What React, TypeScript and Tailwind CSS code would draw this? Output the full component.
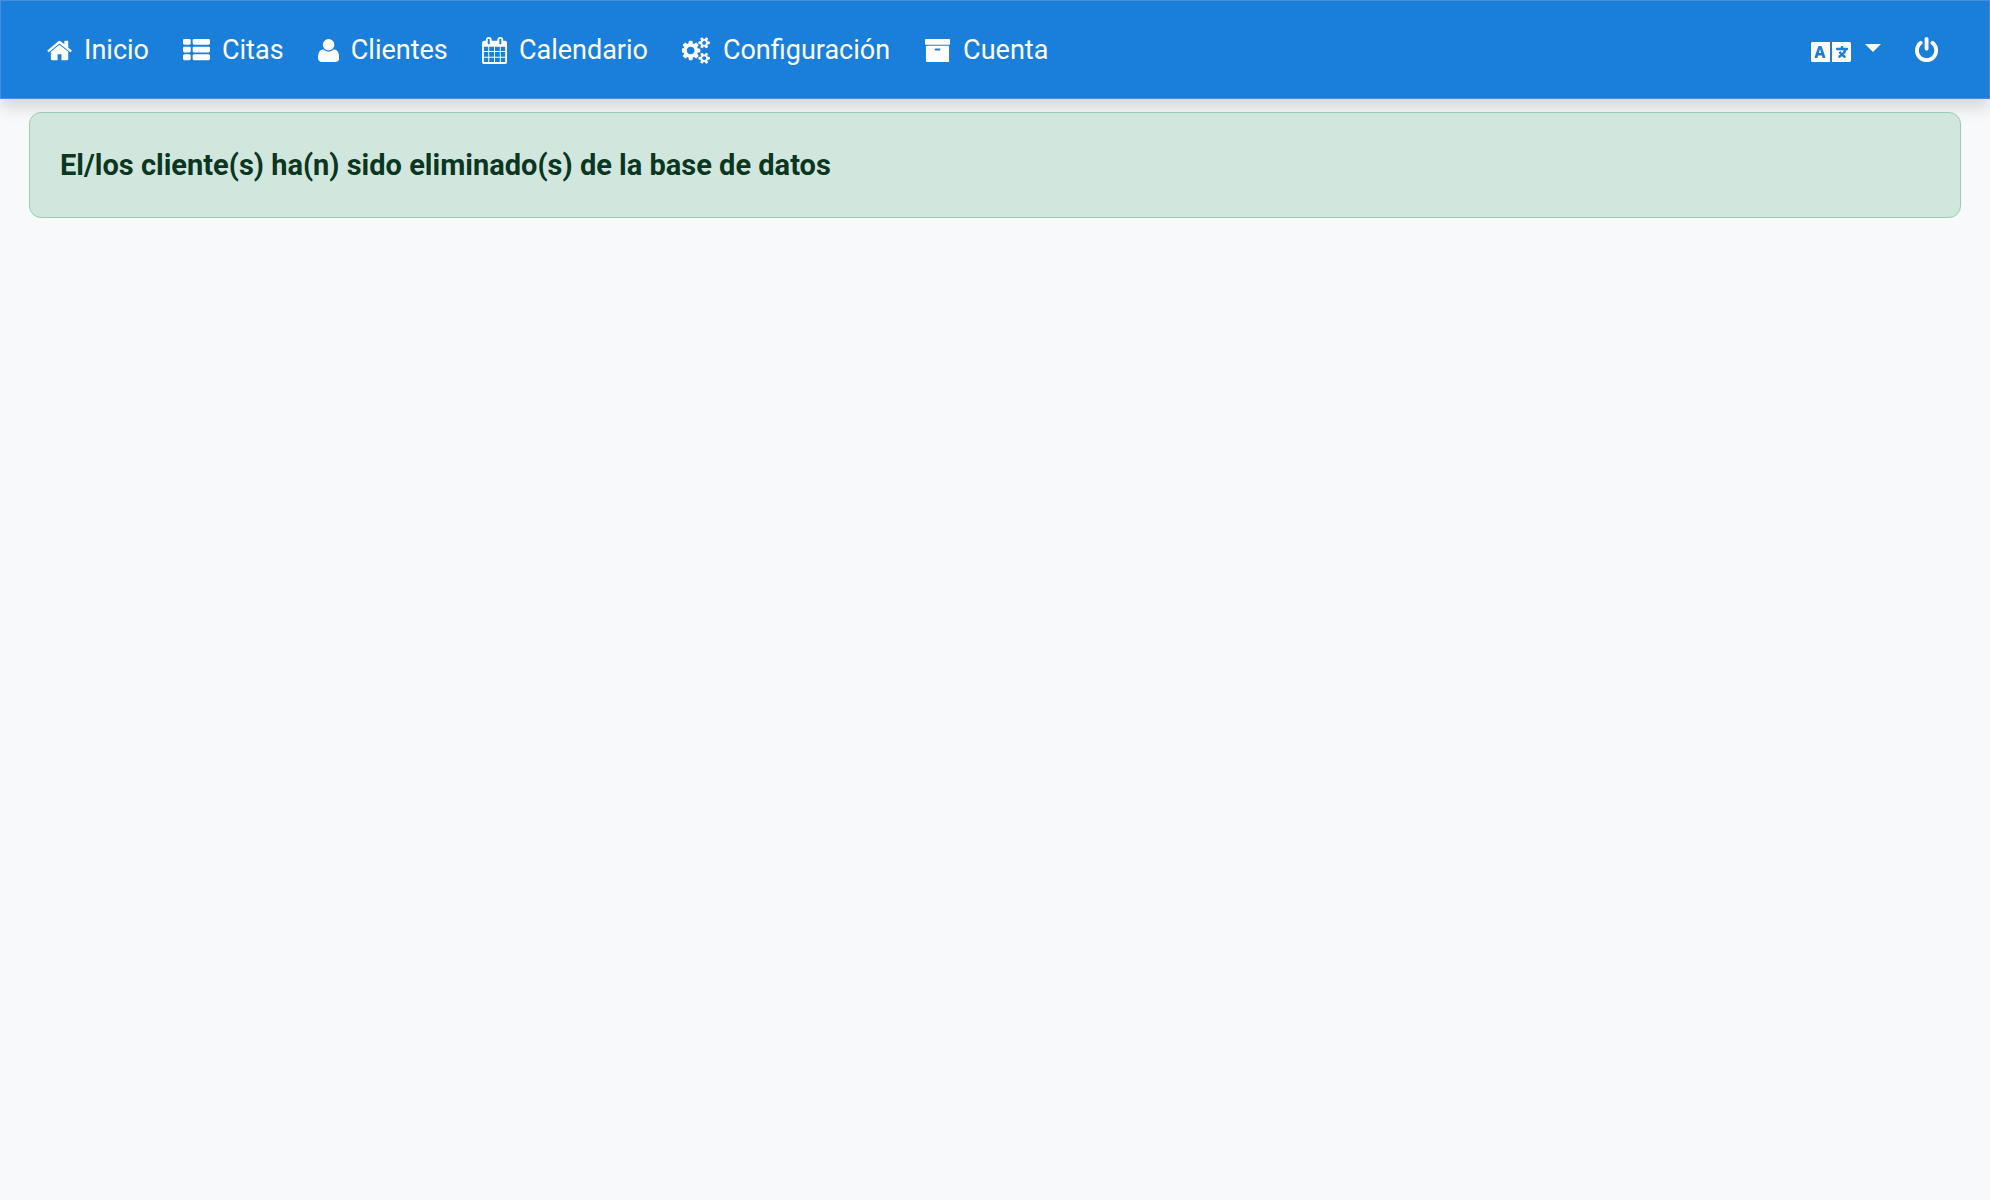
import type { ReactNode } from "react";
import { FaLanguage } from "react-icons/fa";

type IconName =
  | "home"
  | "list"
  | "user"
  | "calendar"
  | "cogs"
  | "archive"
  | "power";

interface IconShape {
  x: number;
  width: number;
  d: string;
}

interface NavItem {
  label: string;
  icon: IconName;
}

// Every glyph is drawn on a 1792 unit em, cropped to its own advance width
const ICONS: Record<IconName, IconShape> = {
  home: {
    x: 64,
    width: 1664,
    d: "M1472 992v480q0 26-19 45t-45 19h-384v-384h-256v384h-384q-26 0-45-19t-19-45v-480q0-1 .5-3t.5-3l575-474 575 474q1 2 1 6zm223-69l-62 74q-8 9-21 11h-3q-13 0-21-7l-692-577-692 577q-12 8-24 7-13-2-21-11l-62-74q-8-10-7-23.5t11-21.5l719-599q32-26 76-26t76 26l244 204v-195q0-14 9-23t23-9h192q14 0 23 9t9 23v408l219 182q10 8 11 21.5t-7 23.5z",
  },
  list: {
    x: 0,
    width: 1792,
    d: "M512 1248v192q0 40-28 68t-68 28h-320q-40 0-68-28t-28-68v-192q0-40 28-68t68-28h320q40 0 68 28t28 68zm0-512v192q0 40-28 68t-68 28h-320q-40 0-68-28t-28-68v-192q0-40 28-68t68-28h320q40 0 68 28t28 68zm1280 512v192q0 40-28 68t-68 28h-960q-40 0-68-28t-28-68v-192q0-40 28-68t68-28h960q40 0 68 28t28 68zm-1280-1024v192q0 40-28 68t-68 28h-320q-40 0-68-28t-28-68v-192q0-40 28-68t68-28h320q40 0 68 28t28 68zm1280 512v192q0 40-28 68t-68 28h-960q-40 0-68-28t-28-68v-192q0-40 28-68t68-28h960q40 0 68 28t28 68zm0-512v192q0 40-28 68t-68 28h-960q-40 0-68-28t-28-68v-192q0-40 28-68t68-28h960q40 0 68 28t28 68z",
  },
  user: {
    x: 192,
    width: 1408,
    d: "M1600 1405q0 120-73 189.5t-194 69.5h-874q-121 0-194-69.5t-73-189.5q0-53 3.5-103.5t14-109 26.5-108.5 43-97.5 62-81 85.5-53.5 111.5-20q9 0 42 21.5t74.5 48 108 48 133.5 21.5 133.5-21.5 108-48 74.5-48 42-21.5q61 0 111.5 20t85.5 53.5 62 81 43 97.5 26.5 108.5 14 109 3.5 103.5zm-320-893q0 159-112.5 271.5t-271.5 112.5-271.5-112.5-112.5-271.5 112.5-271.5 271.5-112.5 271.5 112.5 112.5 271.5z",
  },
  calendar: {
    x: 64,
    width: 1664,
    d: "M192 1664h288v-288h-288v288zm352 0h320v-288h-320v288zm-352-352h288v-320h-288v320zm352 0h320v-320h-320v320zm-352-384h288v-288h-288v288zm736 736h320v-288h-320v288zm-384-736h320v-288h-320v288zm768 736h288v-288h-288v288zm-384-352h320v-320h-320v320zm-352-864v-288q0-13-9.5-22.5t-22.5-9.5h-64q-13 0-22.5 9.5t-9.5 22.5v288q0 13 9.5 22.5t22.5 9.5h64q13 0 22.5-9.5t9.5-22.5zm736 864h288v-320h-288v320zm-384-384h320v-288h-320v288zm384 0h288v-288h-288v288zm32-480v-288q0-13-9.5-22.5t-22.5-9.5h-64q-13 0-22.5 9.5t-9.5 22.5v288q0 13 9.5 22.5t22.5 9.5h64q13 0 22.5-9.5t9.5-22.5zm384-64v1280q0 52-38 90t-90 38h-1408q-52 0-90-38t-38-90v-1280q0-52 38-90t90-38h128v-96q0-66 47-113t113-47h64q66 0 113 47t47 113v96h384v-96q0-66 47-113t113-47h64q66 0 113 47t47 113v96h128q52 0 90 38t38 90z",
  },
  cogs: {
    x: 0,
    width: 1920,
    d: "M832 896q0-106-75-181t-181-75-181 75-75 181 75 181 181 75 181-75 75-181zm768 512q0-52-38-90t-90-38-90 38-38 90q0 53 37.5 90.5t90.5 37.5 90.5-37.5 37.5-90.5zm0-1024q0-52-38-90t-90-38-90 38-38 90q0 53 37.5 90.5t90.5 37.5 90.5-37.5 37.5-90.5zm-384 421v185q0 10-7 19.5t-16 10.5l-155 24q-11 35-32 76 34 48 90 115 7 11 7 20 0 12-7 19-23 30-82.5 89.5t-78.5 59.5q-11 0-21-7l-115-90q-37 19-77 31-11 108-23 155-7 24-30 24h-186q-11 0-20-7.5t-10-17.5l-23-153q-34-10-75-31l-118 89q-7 7-20 7-11 0-21-8-144-133-144-160 0-9 7-19 10-14 41-53t47-61q-23-44-35-82l-152-24q-10-1-17-9.5t-7-19.5v-185q0-10 7-19.5t16-10.5l155-24q11-35 32-76-34-48-90-115-7-11-7-20 0-12 7-20 22-30 82-89t79-59q11 0 21 7l115 90q34-18 77-32 11-108 23-154 7-24 30-24h186q11 0 20 7.5t10 17.5l23 153q34 10 75 31l118-89q8-7 20-7 11 0 21 8 144 133 144 160 0 8-7 19-12 16-42 54t-45 60q23 48 34 82l152 23q10 2 17 10.5t7 19.5zm640 533v140q0 16-149 31-12 27-30 52 51 113 51 138 0 4-4 7-122 71-124 71-8 0-46-47t-52-68q-20 2-30 2t-30-2q-14 21-52 68t-46 47q-2 0-124-71-4-3-4-7 0-25 51-138-18-25-30-52-149-15-149-31v-140q0-16 149-31 13-29 30-52-51-113-51-138 0-4 4-7 4-2 35-20t59-34 30-16q8 0 46 46.5t52 67.5q20-2 30-2t30 2q51-71 92-112l6-2q4 0 124 70 4 3 4 7 0 25-51 138 17 23 30 52 149 15 149 31zm0-1024v140q0 16-149 31-12 27-30 52 51 113 51 138 0 4-4 7-122 71-124 71-8 0-46-47t-52-68q-20 2-30 2t-30-2q-14 21-52 68t-46 47q-2 0-124-71-4-3-4-7 0-25 51-138-18-25-30-52-149-15-149-31v-140q0-16 149-31 13-29 30-52-51-113-51-138 0-4 4-7 4-2 35-20t59-34 30-16q8 0 46 46.5t52 67.5q20-2 30-2t30 2q51-71 92-112l6-2q4 0 124 70 4 3 4 7 0 25-51 138 17 23 30 52 149 15 149 31z",
  },
  archive: {
    x: 0,
    width: 1792,
    d: "M1088 832q0-26-19-45t-45-19h-256q-26 0-45 19t-19 45 19 45 45 19h256q26 0 45-19t19-45zm576-192v960q0 26-19 45t-45 19h-1408q-26 0-45-19t-19-45v-960q0-26 19-45t45-19h1408q26 0 45 19t19 45zm64-448v256q0 26-19 45t-45 19h-1536q-26 0-45-19t-19-45v-256q0-26 19-45t45-19h1536q26 0 45 19t19 45z",
  },
  power: {
    x: 128,
    width: 1536,
    d: "M1664 896q0 156-61 298t-164 245-245 164-298 61-298-61-245-164-164-245-61-298q0-182 80.5-343t226.5-270q43-32 95.5-25t83.5 50q32 42 24.5 94.5t-49.5 84.5q-98 74-151.5 181t-53.5 228q0 104 40.5 198.5t109.5 163.5 163.5 109.5 198.5 40.5 198.5-40.5 163.5-109.5 109.5-163.5 40.5-198.5q0-121-53.5-228t-151.5-181q-42-32-49.5-84.5t24.5-94.5q31-43 84-50t95 25q146 109 226.5 270t80.5 343zm-640-768v640q0 52-38 90t-90 38-90-38-38-90v-640q0-52 38-90t90-38 90 38 38 90z",
  },
};

const NAV_ITEMS: NavItem[] = [
  { label: "Inicio", icon: "home" },
  { label: "Citas", icon: "list" },
  { label: "Clientes", icon: "user" },
  { label: "Calendario", icon: "calendar" },
  { label: "Configuración", icon: "cogs" },
  { label: "Cuenta", icon: "archive" },
];

function Icon({ name }: { name: IconName }) {
  const { x, width, d } = ICONS[name];
  return (
    <svg
      viewBox={`${x} 0 ${width} 1792`}
      className="h-[27px] w-auto shrink-0"
      fill="currentColor"
      aria-hidden="true"
    >
      <path d={d} />
    </svg>
  );
}

function Alert({ children }: { children: ReactNode }) {
  return (
    <div
      role="alert"
      className="rounded-xl border border-[#9ccbb5] bg-[#d1e7dd] px-[30px] py-8 text-[29px] leading-10 font-bold text-[#0a3622]"
    >
      {children}
    </div>
  );
}

export default function App() {
  return (
    <div className="min-h-screen bg-[#f8f9fb] font-[Roboto,sans-serif]">
      <header className="flex items-center justify-between border border-[#478fd9] bg-[#1a7fda] pt-[29px] pr-[51px] pb-7 pl-[46px] text-[27px] leading-10 text-white shadow-[0_8px_16px_rgba(0,0,0,0.15)]">
        <nav>
          <ul className="flex flex-wrap items-center gap-x-[34px]">
            {NAV_ITEMS.map((item) => (
              <li key={item.label}>
                <a href="#" className="flex items-center gap-3">
                  <Icon name={item.icon} />
                  {item.label}
                </a>
              </li>
            ))}
          </ul>
        </nav>

        <div className="flex items-center gap-[34px]">
          <button
            type="button"
            aria-label="Idioma"
            aria-haspopup="menu"
            className="flex items-center gap-3.5"
          >
            <FaLanguage className="mt-1 h-8 w-10" />
            <span className="mb-1 border-x-8 border-t-8 border-x-transparent" />
          </button>
          <a href="#" aria-label="Salir">
            <Icon name="power" />
          </a>
        </div>
      </header>

      <main className="px-[29px] pt-[13px]">
        <Alert>El/los cliente(s) ha(n) sido eliminado(s) de la base de datos</Alert>
      </main>
    </div>
  );
}
